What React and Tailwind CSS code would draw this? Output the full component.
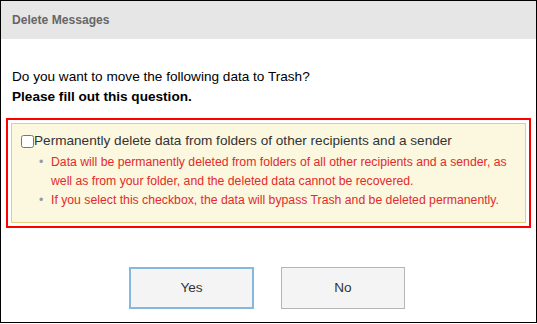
export default function App() {
  return (
    <div className="w-[537px] h-[324px] bg-white" style={{ fontFamily: '"Liberation Sans", Arial, sans-serif' }}>
      <div className="w-[537px] h-[323px] border border-black flex flex-col">
        <div className="h-[38px] shrink-0 bg-[#e6e6e6] flex items-center pl-[11px] text-[12.1px] font-bold text-[#666666]">
          Delete Messages
        </div>
        <div className="pt-[28px] px-[11px] text-black text-[13.6px] leading-[20px]">
          <div>Do you want to move the following data to Trash?</div>
          <div className="font-bold">Please fill out this question.</div>
        </div>
        <div className="mx-[5px] mt-[11px] border-2 border-[#ff0000] p-[3px]">
          <div className="h-[100px] border border-[#e0d080] bg-[#fcf7df] pt-[8px] pl-[9px] pr-[6px]">
            <label className="flex items-center text-[13.6px] text-[#333333] leading-[18px]">
              <input type="checkbox" className="w-[13px] h-[13px] m-0" />
              Permanently delete data from folders of other recipients and a sender
            </label>
            <ul className="mt-[3px] pl-[18px] text-[12.24px] text-[#e22b2b] leading-[19px]">
              <li className="flex">
                <span className="w-[12px] shrink-0 text-[#999999]">•</span>
                <span>Data will be permanently deleted from folders of all other recipients and a sender, as well as from your folder, and the deleted data cannot be recovered.</span>
              </li>
              <li className="flex">
                <span className="w-[12px] shrink-0 text-[#999999]">•</span>
                <span>If you select this checkbox, the data will bypass Trash and be deleted permanently.</span>
              </li>
            </ul>
          </div>
        </div>
        <div className="flex gap-[27px] mt-[39px] ml-[128px]">
          <button className="w-[125px] h-[42px] border-2 border-[#86b7dd] bg-[#f4f4f4] text-[13.6px] text-[#333333]">Yes</button>
          <button className="w-[124px] h-[42px] border border-[#b5b5b5] bg-[#f4f4f4] text-[13.6px] text-[#333333]">No</button>
        </div>
      </div>
    </div>
  );
}
